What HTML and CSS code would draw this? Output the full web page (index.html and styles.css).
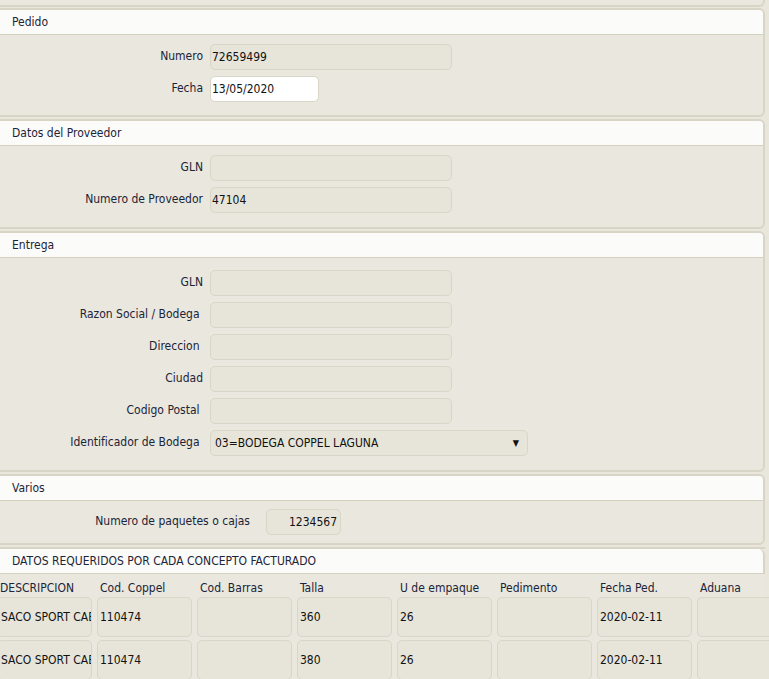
FILE: index.html
```html
<!DOCTYPE html>
<html lang="es">
<head>
    <meta charset="UTF-8">
    <title>Pedido</title>
    <link rel="stylesheet" href="styles.css">
</head>
<body>

<div class="page">
    <div class="panel panel-top"></div>

    <!-- Pedido -->
    <div class="panel">
        <div class="panel-header">Pedido</div>
        <div class="panel-body pedido">
            <div class="row">
                <label>Numero</label>
                <div class="field">72659499</div>
            </div>
            <div class="row">
                <label>Fecha</label>
                <div class="field field-date">13/05/2020</div>
            </div>
        </div>
    </div>

    <!-- Proveedor -->
    <div class="panel">
        <div class="panel-header">Datos del Proveedor</div>
        <div class="panel-body">
            <div class="row">
                <label>GLN</label>
                <div class="field"></div>
            </div>
            <div class="row">
                <label>Numero de Proveedor</label>
                <div class="field">47104</div>
            </div>
        </div>
    </div>

    <!-- Entrega -->
    <div class="panel">
        <div class="panel-header">Entrega</div>
        <div class="panel-body entrega">
            <div class="row">
                <label>GLN</label>
                <div class="field"></div>
            </div>
            <div class="row">
                <label>Razon Social / Bodega&nbsp;</label>
                <div class="field"></div>
            </div>
            <div class="row">
                <label>Direccion&nbsp;</label>
                <div class="field"></div>
            </div>
            <div class="row">
                <label>Ciudad</label>
                <div class="field"></div>
            </div>
            <div class="row">
                <label>Codigo Postal&nbsp;</label>
                <div class="field"></div>
            </div>
            <div class="row">
                <label>Identificador de Bodega&nbsp;</label>
                <div class="field field-select">
                    <span>03=BODEGA COPPEL LAGUNA</span>
                    <span class="arrow">&#9660;</span>
                </div>
            </div>
        </div>
    </div>

    <!-- Varios -->
    <div class="panel">
        <div class="panel-header">Varios</div>
        <div class="panel-body varios">
            <div class="row">
                <label>Numero de paquetes o cajas</label>
                <div class="field field-small">1234567</div>
            </div>
        </div>
    </div>

    <!-- Conceptos -->
    <div class="panel panel-open">
        <div class="panel-header">DATOS REQUERIDOS POR CADA CONCEPTO FACTURADO</div>
        <div class="conceptos">
            <div class="col-head">DESCRIPCION</div>
            <div class="col-head">Cod. Coppel</div>
            <div class="col-head">Cod. Barras</div>
            <div class="col-head">Talla</div>
            <div class="col-head">U de empaque</div>
            <div class="col-head">Pedimento</div>
            <div class="col-head">Fecha Ped.</div>
            <div class="col-head">Aduana</div>

            <div class="cell">SACO SPORT CABALLERO</div>
            <div class="cell">110474</div>
            <div class="cell"></div>
            <div class="cell">360</div>
            <div class="cell">26</div>
            <div class="cell"></div>
            <div class="cell">2020-02-11</div>
            <div class="cell"></div>

            <div class="cell">SACO SPORT CABALLERO</div>
            <div class="cell">110474</div>
            <div class="cell"></div>
            <div class="cell">380</div>
            <div class="cell">26</div>
            <div class="cell"></div>
            <div class="cell">2020-02-11</div>
            <div class="cell"></div>
        </div>
    </div>
</div>

</body>
</html>
```

FILE: styles.css
```css
html, body {
    overflow: hidden;
}
body {
    margin: 0;
    padding: 0;
    background-color: #e9e6dc;
    font-family: "DejaVu Sans Condensed", "DejaVu Sans", sans-serif;
    font-size: 12px;
    color: #1b2438;
}
.page {
    margin-left: -10px;
    margin-right: 4px;
}
.panel {
    border: 2px solid #d9d5c6;
    border-radius: 6px;
    margin-bottom: 2px;
    background-color: #e9e7de;
}
.panel-top {
    height: 5px;
    border-top: none;
    border-radius: 0 0 6px 6px;
    margin-bottom: 1px;
}
.panel-header {
    height: 24px;
    line-height: 24px;
    padding-left: 20px;
    background-color: #fbfbf9;
    border-bottom: 1px solid #d5d1c1;
    border-radius: 4px 4px 0 0;
}
.panel-body {
    padding: 9px 0 14px 0;
    display: flex;
    flex-direction: column;
    gap: 6px;
}
.panel-body.pedido {
    padding-bottom: 13px;
}
.panel-body.entrega {
    padding-top: 12px;
    padding-bottom: 14px;
}
.panel-body.varios {
    padding-top: 8px;
    padding-bottom: 8px;
}
.row {
    display: flex;
    gap: 7px;
}
.row label {
    width: 211px;
    text-align: right;
    padding-top: 5px;
    white-space: nowrap;
}
.varios .row {
    gap: 16px;
}
.varios .row label {
    width: 258px;
}
.field {
    width: 239px;
    height: 24px;
    line-height: 25px;
    padding-left: 1px;
    border: 1px solid #d9d6c7;
    border-radius: 5px;
    background-color: #e7e5da;
    color: #111;
    overflow: hidden;
    white-space: nowrap;
}
.field-date {
    width: 106px;
    background-color: #ffffff;
}
.field-select {
    width: 312px;
    padding-left: 4px;
    display: flex;
    justify-content: space-between;
}
.field-select .arrow {
    font-size: 9px;
    padding-right: 8px;
}
.field-small {
    width: 69px;
    padding-right: 3px;
    text-align: right;
}
.panel-open {
    border-right: none;
    border-bottom: none;
    border-radius: 6px 0 0 0;
}
.panel-open .panel-header {
    border-right: 2px solid #d9d5c6;
    border-top-right-radius: 6px;
}
.conceptos {
    display: grid;
    grid-template-columns: repeat(8, 95px);
    column-gap: 5px;
    row-gap: 3px;
    padding-left: 5px;
}
.col-head {
    height: 17px;
    padding-top: 3px;
    line-height: 22px;
    padding-left: 3px;
    white-space: nowrap;
}
.cell {
    height: 38px;
    line-height: 38px;
    padding-left: 2px;
    border: 1px solid #d9d6c7;
    border-radius: 5px;
    background-color: #e7e5da;
    color: #111;
    overflow: hidden;
    white-space: nowrap;
}
.cell:nth-child(8n+1) {
    padding-left: 3px;
}
```
